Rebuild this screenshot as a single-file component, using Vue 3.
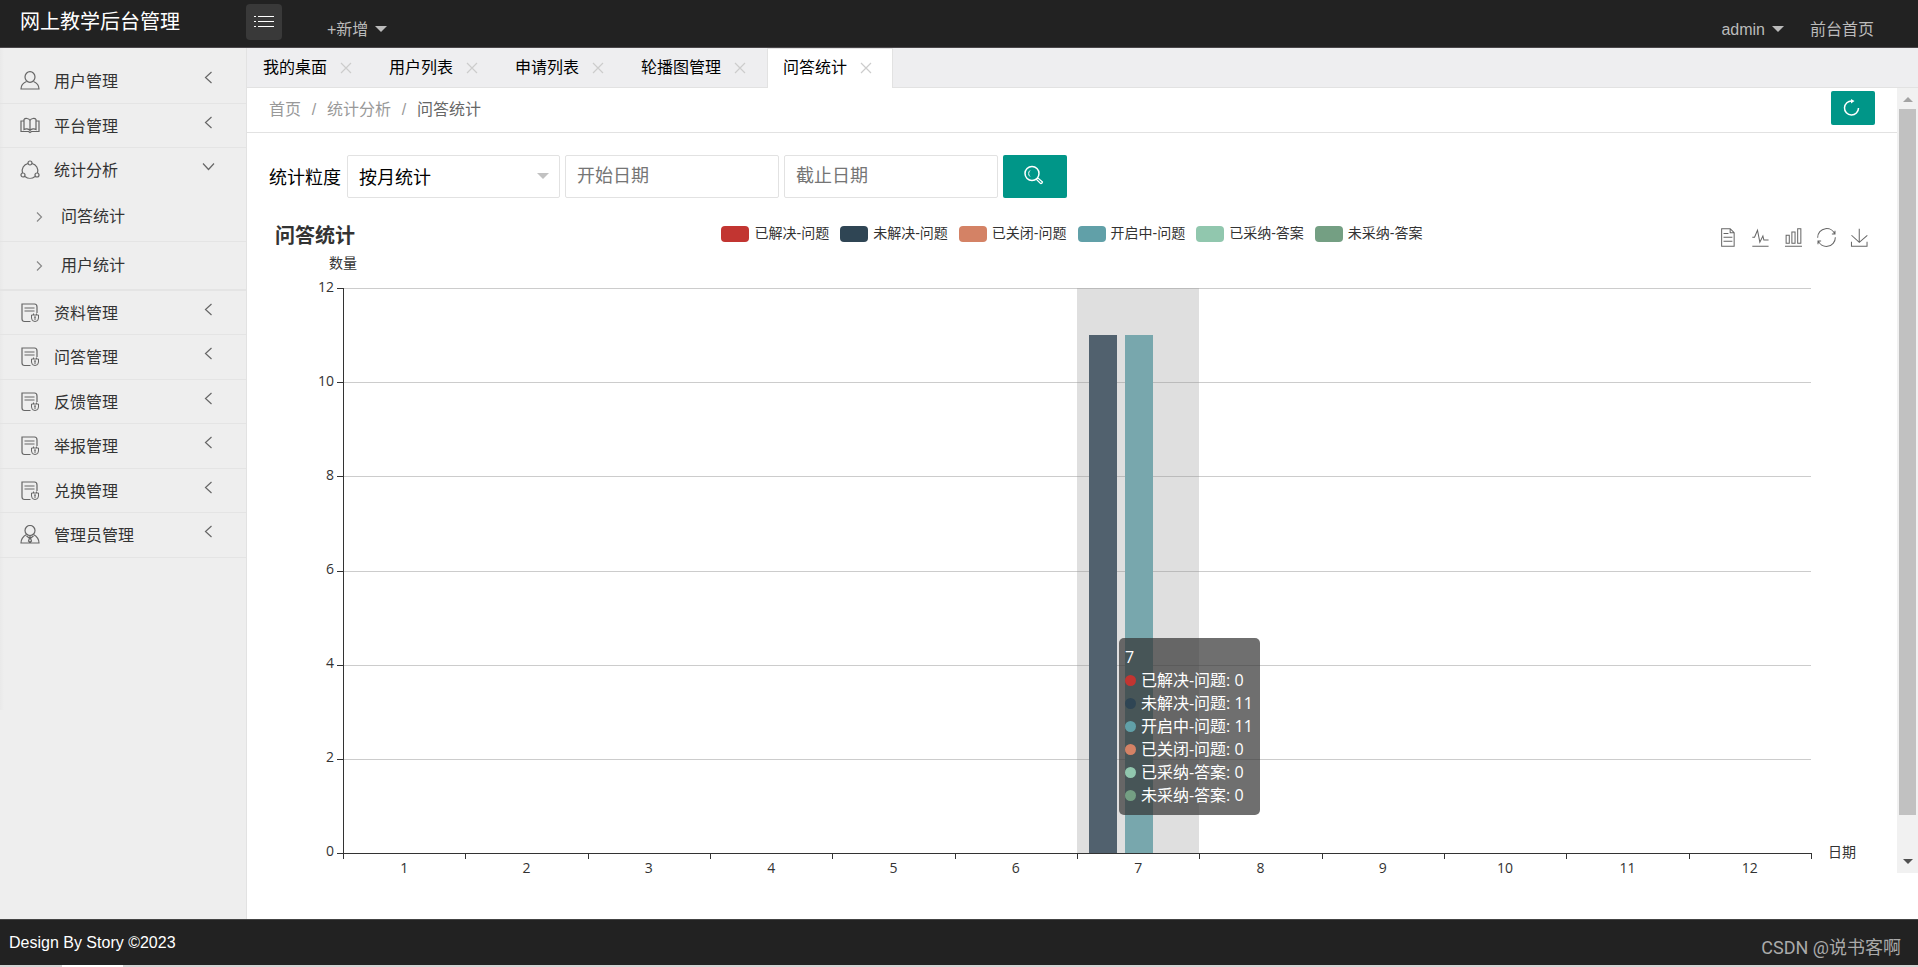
<script setup>
import { ref } from 'vue'

const menu = [
  { label: '用户管理', icon: 'user' },
  { label: '平台管理', icon: 'book' },
  { label: '统计分析', icon: 'share', open: true, children: ['问答统计', '用户统计'] },
  { label: '资料管理', icon: 'doc' },
  { label: '问答管理', icon: 'doc' },
  { label: '反馈管理', icon: 'doc' },
  { label: '举报管理', icon: 'doc' },
  { label: '兑换管理', icon: 'doc' },
  { label: '管理员管理', icon: 'admin' },
]

const tabs = ['我的桌面', '用户列表', '申请列表', '轮播图管理', '问答统计']
const activeTab = ref('问答统计')
const unit = ref('month')
const startDate = ref('')
const endDate = ref('')

const legend = [
  { name: '已解决-问题', color: 'red' },
  { name: '未解决-问题', color: 'navy' },
  { name: '已关闭-问题', color: 'orange' },
  { name: '开启中-问题', color: 'teal' },
  { name: '已采纳-答案', color: 'mint' },
  { name: '未采纳-答案', color: 'green' },
]

const tooltip = [
  { name: '已解决-问题', color: 'red', value: 0 },
  { name: '未解决-问题', color: 'navy', value: 11 },
  { name: '开启中-问题', color: 'teal', value: 11 },
  { name: '已关闭-问题', color: 'orange', value: 0 },
  { name: '已采纳-答案', color: 'mint', value: 0 },
  { name: '未采纳-答案', color: 'green', value: 0 },
]

const tools = [
  { name: '数据视图', d: 'M17.5,17.3H33M45.4,29.5h-28M11.5,2v56H51V14.8L38.4,2H11.5zM38.4,2.2v12.7H51M45.4,41.7h-28' },
  { name: '切换为折线图', d: 'M4.1,28.9h7.1l9.3-22l7.4,38l9.7-19.7l3,12.8h14.9M4.1,58h51.4' },
  { name: '切换为柱状图', d: 'M6.7,22.9h10V48h-10V22.9zM24.9,13h10v35h-10V13zM43.2,2h10v46h-10V2zM3.1,58h53.7' },
  { name: '还原', d: 'M47,18.9h9.8V8.7M56.3,20.1C52.1,9,40.5,0.6,26.8,2.1C12.6,3.7,1.6,16.2,2.1,30.6M13,41.1H3.1v10.2M3.7,39.9c4.2,11.1,15.8,19.5,29.5,18c14.2-1.6,25.2-14.1,24.7-28.5' },
  { name: '保存为图片', d: 'M4.7,22.9L29.3,45.5L54.7,23.4M4.6,43.6L4.6,58L53.8,58L53.8,43.6M29.2,45.1L29.2,2' },
]

const maxValue = 12
const yTicks = [12, 10, 8, 6, 4, 2, 0]
const months = Array.from({ length: 12 }, (_, i) => i + 1)
const hovered = 7
const bars = [
  { color: 'navy', value: 11 },
  { color: 'teal', value: 11 },
]
</script>

<template>
  <div class="page">
    <header class="topbar">
      <a class="logo" href="#">网上教学后台管理</a>
      <button class="toggle" type="button" aria-label="折叠菜单">
        <svg width="20" height="12" viewBox="0 0 20 12"><path d="M0 .5h2M4 .5h16M0 5.500h2M4 5.500h16M0 10.500h2M4 10.500h16" stroke="#fff" fill="none" /></svg>
      </button>
      <a class="toplink" href="#">+新增<i class="caret"></i></a>
      <div class="account">
        <a class="toplink" href="#">admin<i class="caret"></i></a>
        <a class="toplink" href="#">前台首页</a>
      </div>
    </header>

    <div class="body">
      <aside class="sidebar">
        <nav class="menu">
          <ul>
            <li v-for="item in menu" :key="item.label">
              <a class="entry" href="#">
                <svg class="entry-icon" width="20" height="20" viewBox="0 0 20 20">
                  <g v-if="item.icon === 'user'">
                    <ellipse cx="10" cy="6" rx="5" ry="5.3" />
                    <path d="M6.500 10.500C3 12 1 14.500 1 18H19C19 14.500 17 12 13.500 10.500" />
                  </g>
                  <g v-else-if="item.icon === 'book'">
                    <path d="M10 4.500C9 2 5 2 4 3.500V13.500C5.500 12.500 8.500 12.500 10 14.500C11.500 12.500 14.500 12.500 16 13.500V3.500C15 2 11 2 10 4.500V14.500M4 5H1V15.500H8.500L10 16.500L11.500 15.500H19V5H16" />
                  </g>
                  <g v-else-if="item.icon === 'share'">
                    <circle cx="10" cy="3" r="2" /><circle cx="3" cy="15" r="2" /><circle cx="17" cy="15" r="2" />
                    <path d="M8 3.500A7.500 7.500 0 0 0 2.500 13M12 3.500A7.500 7.500 0 0 1 17.500 13M5 16.500A8 8 0 0 0 15 16.500" />
                  </g>
                  <g v-else-if="item.icon === 'doc'">
                    <path d="M10.500 18.500H4.500Q2 18.500 2 16V1H14.500Q17 1 17 4V10M4.500 5H14.500M4.500 8H14.500" />
                    <path d="M11.500 12H18.500V15Q18.500 18.500 15 18.500Q11.500 18.500 11.500 15ZM13.500 12V10.500M16.500 12V10.500M14 14H16M15 14V17" stroke-width="1" />
                  </g>
                  <g v-else>
                    <circle cx="10" cy="5.500" r="5" />
                    <path d="M6.500 9.500C3 11.500 1 14 1 18H19C19 14 17 11.500 13.500 9.500M6.500 11L10 13.500L13.500 11M10 11.500L8.500 16L10 17.500L11.500 16Z" />
                  </g>
                </svg>
                <span>{{ item.label }}</span>
                <svg v-if="item.open" class="arrow" width="13" height="13" viewBox="0 0 13 13"><path d="M1 3.500L6.500 9.500L12 3.500" /></svg>
                <svg v-else class="arrow" width="13" height="13" viewBox="0 0 13 13"><path d="M9.500 1L3.500 6.500L9.500 12" /></svg>
              </a>
              <ul v-if="item.children" class="submenu">
                <li v-for="child in item.children" :key="child">
                  <a href="#">
                    <svg width="7" height="10" viewBox="0 0 7 10"><path d="M1 .5L5.500 5L1 9.500" /></svg>
                    <span>{{ child }}</span>
                  </a>
                </li>
              </ul>
            </li>
          </ul>
        </nav>
      </aside>

      <main class="main">
        <div class="tabs">
          <div v-for="tab in tabs" :key="tab" class="tab" :class="{ active: tab === activeTab }">
            <a href="#" @click.prevent="activeTab = tab">{{ tab }}</a>
            <button type="button" :aria-label="'关闭' + tab">
              <svg width="12" height="12" viewBox="0 0 12 12"><path d="M1 1L11 11M11 1L1 11" /></svg>
            </button>
          </div>
        </div>

        <div class="view">
          <div class="content">
            <div class="crumbs">
              <a href="#">首页</a><span class="sep">/</span><a href="#">统计分析</a><span class="sep">/</span><span class="here">问答统计</span>
              <button class="refresh" type="button" aria-label="刷新">
                <svg width="18" height="18" viewBox="0 0 18 18"><path d="M15.500 9A7 7 0 1 1 9 2" stroke="#fff" stroke-width="1.500" fill="none" /><path d="M8 0L11.500 2L8 4.500Z" fill="#fff" /></svg>
              </button>
            </div>

            <form class="filters" @submit.prevent>
              <label for="unit">统计粒度</label>
              <div class="select">
                <select id="unit" v-model="unit">
                  <option value="month">按月统计</option>
                </select>
                <i class="select-caret"></i>
              </div>
              <input v-model="startDate" type="text" placeholder="开始日期" aria-label="开始日期" />
              <input v-model="endDate" type="text" placeholder="截止日期" aria-label="截止日期" />
              <button class="search" type="submit" aria-label="搜索">
                <svg width="20" height="20" viewBox="0 0 20 20" fill="none" stroke="#fff"><circle cx="8" cy="8.500" r="7" stroke-width="1.500" /><path d="M6 5.500A4 4 0 0 0 6 11.500" /><path d="M12.500 14.500L14 13L18.500 17Q18 18.800 16.500 18.500Z" stroke-width="1.200" /></svg>
              </button>
            </form>

            <section class="chart">
              <div class="chart-head">
                <h2>问答统计</h2>
                <ul class="legend">
                  <li v-for="item in legend" :key="item.name"><i class="swatch" :class="item.color"></i><span>{{ item.name }}</span></li>
                </ul>
                <div class="toolbox">
                  <button v-for="tool in tools" :key="tool.name" type="button" :aria-label="tool.name">
                    <svg width="19" height="19" viewBox="0 0 60 60"><path :d="tool.d" /></svg>
                  </button>
                </div>
              </div>
              <div class="axis-title">数量</div>
              <div class="plot-row">
                <div class="y-labels"><span v-for="tick in yTicks" :key="tick">{{ tick }}</span></div>
                <div class="plot">
                  <div class="lines"><i v-for="n in 6" :key="n"></i></div>
                  <div class="columns">
                    <div v-for="month in months" :key="month" class="column" :class="{ hovered: month === hovered }">
                      <template v-if="month === hovered">
                        <i v-for="bar in bars" :key="bar.color" class="bar" :class="bar.color" :style="{ height: (bar.value / maxValue) * 100 + '%' }"></i>
                        <div class="tooltip">
                          <div>{{ month }}</div>
                          <div v-for="row in tooltip" :key="row.name"><i class="dot" :class="row.color"></i>{{ row.name }}: {{ row.value }}</div>
                        </div>
                      </template>
                    </div>
                  </div>
                </div>
                <div class="x-title">日期</div>
              </div>
              <div class="x-labels"><span v-for="month in months" :key="month">{{ month }}</span></div>
            </section>
          </div>
          <div class="scrollbar" aria-hidden="true">
            <i class="up"></i>
            <div class="track"><div class="thumb"></div></div>
            <i class="down"></i>
          </div>
        </div>
      </main>
    </div>

    <footer class="footer">
      <span>Design By Story ©2023</span>
      <span class="credit">CSDN @说书客啊</span>
    </footer>
    <div class="edge"><div></div></div>
  </div>
</template>

<style>
body { background: #fff; }
</style>

<style scoped>
* { box-sizing: border-box; }
.page {
  display: flex;
  flex-direction: column;
  min-height: 100vh;
  font: 16px/24px "Liberation Sans", "Noto Sans CJK SC", sans-serif;
  color: #000;
}
a { color: inherit; text-decoration: none; }
ul { list-style: none; margin: 0; padding: 0; }
button { border: 0; padding: 0; background: none; cursor: pointer; font: inherit; }
svg { display: block; }

.topbar {
  display: flex;
  height: 48px;
  background: #222;
  border-bottom: 1px solid #4a474a;
  color: #bbb;
}
.logo { width: 246px; padding: 10px 0 0 20px; font-size: 20px; color: #fff; }
.toggle {
  display: flex;
  align-items: center;
  justify-content: center;
  width: 36px;
  height: 36px;
  margin: 4px 45px 0 0;
  border-radius: 4px;
  background: #393939;
}
.toplink { display: flex; align-items: center; height: 24px; margin-top: 18px; }
.caret { margin: 0 0 2px 7px; border: 6px solid transparent; border-top-color: #bbb; border-bottom: 0; }
.account { display: flex; gap: 26px; margin-left: auto; padding-right: 44px; }

.body { display: flex; flex: 1; }
.sidebar { width: 247px; background: #eee; border-right: 1px solid #e2e2e2; color: #333; }
.menu { height: 76%; padding-top: 11px; background: linear-gradient(90deg, #e9e9e9, #eee 4px); }
.entry {
  display: flex;
  align-items: center;
  height: 44px;
  padding: 2px 31px 0 20px;
  border-bottom: 1px solid #e4e4e4;
}
.menu > ul > li:nth-child(odd) > .entry { height: 45px; }
.menu > ul > li:nth-child(3) > .entry { border-bottom-color: transparent; }
.entry-icon { margin: 0 14px 2px 0; fill: none; stroke: #666; stroke-width: 1.2; }
.arrow { margin: 0 0 9px auto; fill: none; stroke: #666; stroke-width: 1.2; }
.submenu a {
  display: flex;
  align-items: center;
  gap: 18px;
  height: 49px;
  padding-left: 36px;
  border-bottom: 1px solid #e4e4e4;
}
.submenu li:last-child a { border-bottom-width: 2px; }
.submenu svg { fill: none; stroke: #888; stroke-width: 1.2; }

.main { display: flex; flex-direction: column; flex: 1; min-width: 0; }
.tabs { display: flex; height: 40px; background: #eeeef0; border-bottom: 1px solid #e2e2e2; }
.tab {
  display: flex;
  align-items: center;
  gap: 13px;
  height: 39px;
  padding: 0 20px 0 15px;
  border: 1px solid transparent;
  border-width: 1px 1px 0;
}
.tab.active { height: 40px; padding-bottom: 1px; background: #fff; border-color: #e2e2e2; }
.tab svg { fill: none; stroke: #ccc; stroke-width: 1.2; }

.view { display: flex; flex: 1; }
.content { display: flex; flex-direction: column; flex: 1; min-width: 0; }
.crumbs {
  display: flex;
  align-items: center;
  height: 45px;
  padding: 0 22px;
  border-bottom: 1px solid #e2e2e2;
  color: #999;
}
.sep { width: 26px; text-align: center; }
.here { color: #666; }
.refresh {
  display: flex;
  align-items: center;
  height: 34px;
  width: 44px;
  padding-left: 12px;
  margin: 0 0 4px auto;
  border-radius: 2px;
  background: #009688;
}

.filters { display: flex; align-items: center; gap: 5px; margin: 22px 22px 19px; font-size: 18px; }
.filters label { padding: 2px 1px 0 0; }
.select { position: relative; width: 213px; }
.select select, .filters input {
  height: 43px;
  padding: 0 11px;
  border: 1px solid #e2e2e2;
  border-radius: 2px;
  background: #fff;
  font: inherit;
  color: #000;
}
.select select { width: 100%; padding-top: 2px; appearance: none; }
.filters input { width: 214px; }
.filters input::placeholder { color: #757575; opacity: 1; }
.select-caret {
  position: absolute;
  right: 11px;
  top: 18px;
  border: 6px solid transparent;
  border-top-color: #c2c2c2;
  border-bottom: 0;
  pointer-events: none;
}
.search {
  display: flex;
  align-items: center;
  justify-content: center;
  width: 64px;
  height: 43px;
  padding: 0 2px 3px 0;
  border-radius: 2px;
  background: #009688;
}

.chart {
  display: flex;
  flex-direction: column;
  flex: 1;
  padding-bottom: 42px;
  font: 14px/20px "Open Sans", "Noto Sans CJK SC", sans-serif;
  color: #333;
}
.chart-head {
  display: grid;
  grid-template-columns: 1fr auto 1fr;
  align-items: center;
  height: 36px;
  padding: 0 28px;
}
h2 { margin: 0; font: bold 20px/30px "Noto Sans CJK SC", sans-serif; }
.legend { display: flex; gap: 11px; padding-bottom: 2px; font-family: "Liberation Sans", "Noto Sans CJK SC", sans-serif; }
.legend li { display: flex; align-items: center; gap: 5px; }
.legend span { padding-bottom: 2px; }
.swatch { width: 28px; height: 16px; border-radius: 4px; }
.toolbox { display: flex; justify-content: flex-end; gap: 14px; padding-top: 5px; }
.toolbox svg { fill: none; stroke: #666; stroke-width: 3.200; overflow: visible; }
.axis-title { width: 192px; text-align: center; }
.red { background: #c23531; }
.navy { background: #2f4554; }
.orange { background: #d48265; }
.teal { background: #61a0a8; }
.mint { background: #91c7ae; }
.green { background: #749f83; }

.plot-row { display: flex; flex: 1; min-height: 300px; padding-top: 15px; }
.y-labels {
  display: flex;
  flex-direction: column;
  justify-content: space-between;
  width: 96px;
  margin: -11px 0 -7px;
  padding-right: 9px;
  text-align: right;
}
.plot { position: relative; flex: 1; border-left: 1px solid #333; border-bottom: 1px solid #333; }
.lines { position: absolute; inset: 0; display: flex; flex-direction: column; }
.lines i { position: relative; flex: 1; border-top: 1px solid #ccc; }
.lines i::before, .plot::before {
  content: "";
  position: absolute;
  left: -7px;
  top: -1px;
  width: 6px;
  height: 1px;
  background: #333;
}
.plot::before { top: 100%; }
.columns { position: absolute; inset: 0 0 0 -1px; display: flex; }
.column { position: relative; display: flex; align-items: flex-end; flex: 1 1 0; min-width: 0; }
.column::before, .column:last-child::after {
  content: "";
  position: absolute;
  left: 0;
  top: 100%;
  width: 1px;
  height: 6px;
  background: #333;
}
.column:last-child::after { left: 100%; }
.column.hovered { z-index: 1; background: rgba(150, 150, 150, .3); }
.bar { width: 23%; margin-right: 6%; }
.bar:first-child { margin-left: 10%; }
.bar.navy { background: #51616e; }
.bar.teal { background: #78a7ad; }
.tooltip {
  position: absolute;
  left: 42px;
  bottom: 38px;
  width: max-content;
  padding: 8px 7px 8px 6px;
  border-radius: 5px;
  background: rgba(50, 50, 50, .7);
  font: 16px/23px "Open Sans", "Noto Sans CJK SC", sans-serif;
  color: #fff;
}
.dot { display: inline-block; width: 11px; height: 11px; margin-right: 5px; border-radius: 50%; }
.x-title { display: flex; align-items: flex-end; width: 86px; margin-bottom: -8px; padding-left: 17px; }
.x-labels { display: flex; margin: 5px 86px 0 96px; line-height: 18px; }
.x-labels span { flex: 1; text-align: center; }

.scrollbar {
  display: flex;
  flex-direction: column;
  align-items: center;
  width: 21px;
  margin-bottom: 46px;
  padding: 9px 0;
  background: #f1f1f1;
}
.up { border: 5px solid transparent; border-bottom-color: #a3a3a3; border-top: 0; }
.down { border: 5px solid transparent; border-top-color: #505050; border-bottom: 0; }
.track { flex: 1; width: 17px; margin: 7px 0; }
.thumb { height: 95%; background: #c1c1c1; }

.footer {
  display: flex;
  align-items: center;
  justify-content: space-between;
  height: 46px;
  padding: 0 17px 0 9px;
  background: #222;
  border-top: 1px solid #444;
  color: #fff;
}
.credit { padding-top: 10px; font: 18px/24px Roboto, "Noto Sans CJK SC", sans-serif; color: #aaa; }
.edge { height: 2px; padding-left: 62px; background: #d4d4d4; }
.edge div { width: 61px; height: 2px; background: #fff; }
</style>
